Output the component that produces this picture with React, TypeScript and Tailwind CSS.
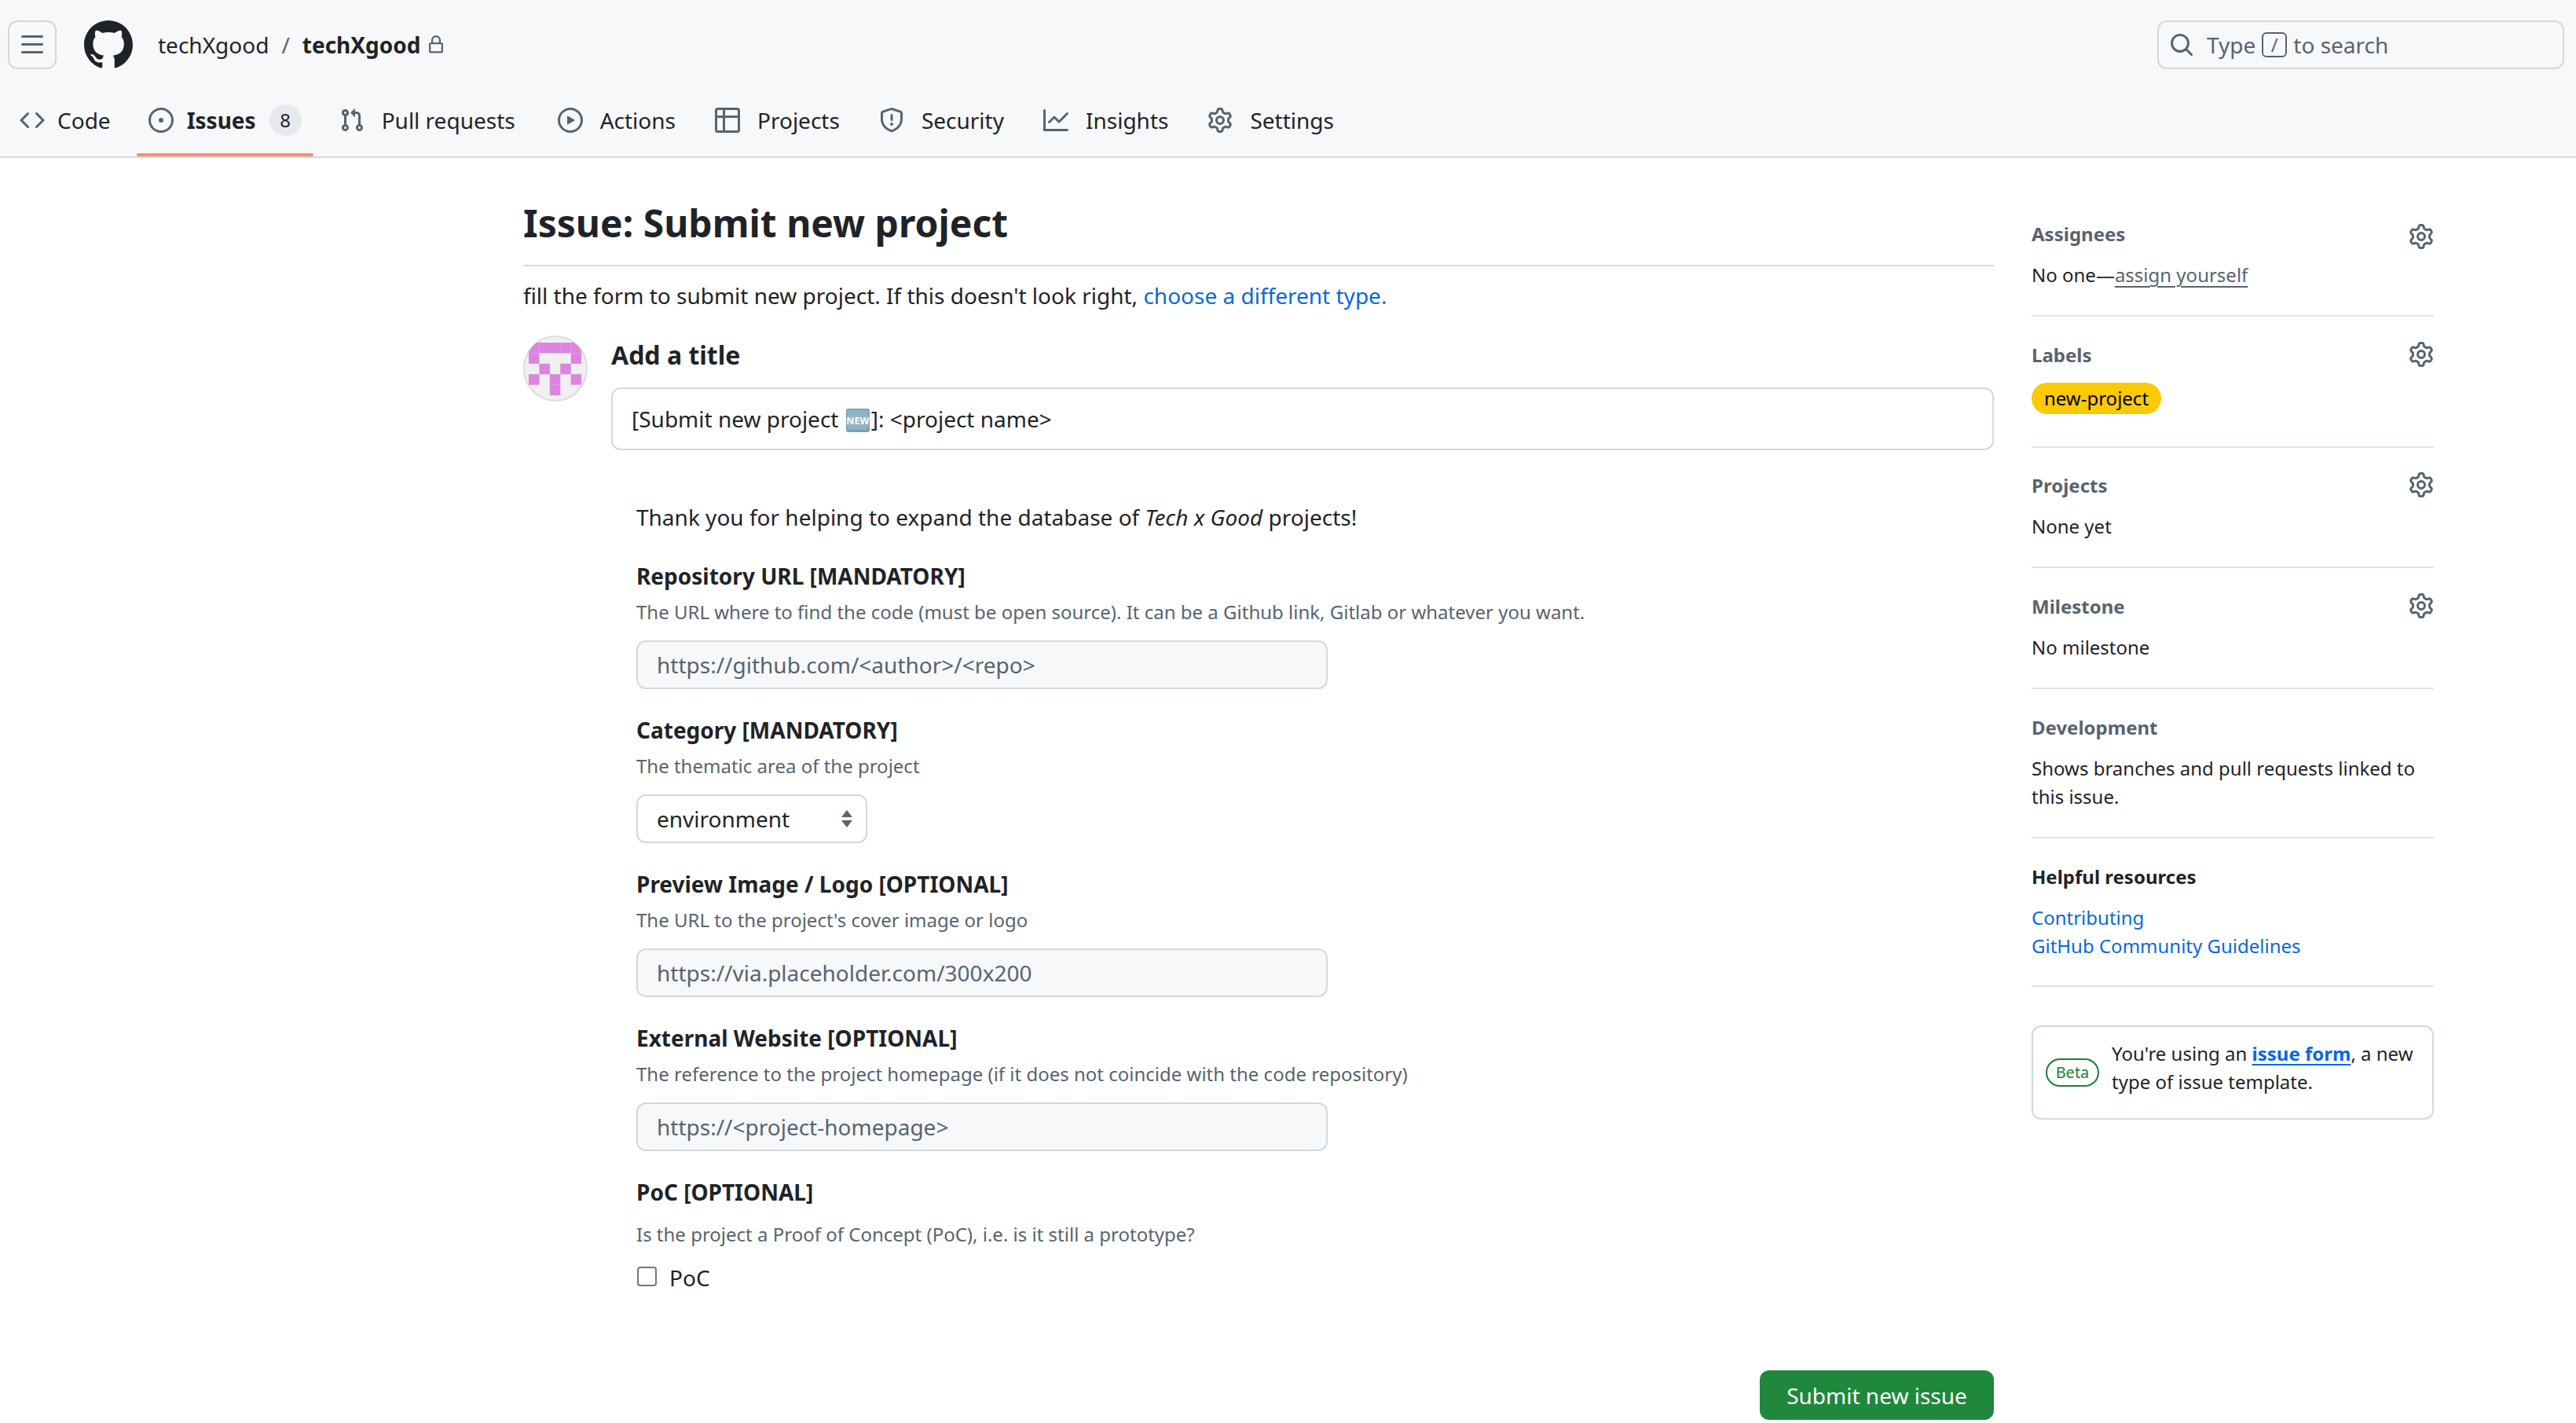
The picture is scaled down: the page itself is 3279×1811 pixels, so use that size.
import type { ReactNode } from "react";

// octicons, 16px grid
const ICONS = {
  bars: "M1 2.75A.75.75 0 0 1 1.75 2h12.5a.75.75 0 0 1 0 1.5H1.75A.75.75 0 0 1 1 2.75Zm0 5A.75.75 0 0 1 1.75 7h12.5a.75.75 0 0 1 0 1.5H1.75A.75.75 0 0 1 1 7.75ZM1.75 12h12.5a.75.75 0 0 1 0 1.5H1.75a.75.75 0 0 1 0-1.5Z",
  github: "M8 0c4.42 0 8 3.58 8 8a8.013 8.013 0 0 1-5.45 7.59c-.4.08-.55-.17-.55-.38 0-.27.01-1.13.01-2.2 0-.75-.25-1.23-.54-1.48 1.78-.2 3.65-.88 3.65-3.95 0-.88-.31-1.59-.82-2.15.08-.2.36-1.02-.08-2.12 0 0-.67-.22-2.2.82-.64-.18-1.32-.27-2-.27-.68 0-1.36.09-2 .27-1.53-1.03-2.2-.82-2.2-.82-.44 1.1-.16 1.92-.08 2.12-.51.56-.82 1.28-.82 2.15 0 3.06 1.86 3.75 3.64 3.95-.23.2-.44.55-.51 1.07-.46.21-1.61.55-2.33-.66-.15-.24-.6-.83-1.23-.82-.67.01-.27.38.01.53.34.19.73.9.82 1.13.16.45.68 1.31 2.69.94 0 .67.01 1.3.01 1.49 0 .21-.15.45-.55.38A7.995 7.995 0 0 1 0 8c0-4.42 3.58-8 8-8Z",
  lock: "M4 4a4 4 0 0 1 8 0v2h.25c.966 0 1.75.784 1.75 1.75v5.5A1.75 1.75 0 0 1 12.25 15h-8.5A1.75 1.75 0 0 1 2 13.25v-5.5C2 6.784 2.784 6 3.75 6H4Zm8.25 3.5h-8.5a.25.25 0 0 0-.25.25v5.5c0 .138.112.25.25.25h8.5a.25.25 0 0 0 .25-.25v-5.5a.25.25 0 0 0-.25-.25ZM10.5 6V4a2.5 2.5 0 1 0-5 0v2Z",
  search: "M10.68 11.74a6 6 0 0 1-7.922-8.982 6 6 0 0 1 8.982 7.922l3.04 3.04a.749.749 0 0 1-.326 1.275.749.749 0 0 1-.734-.215ZM11.5 7a4.499 4.499 0 1 0-8.997 0A4.499 4.499 0 0 0 11.5 7Z",
  code: "m11.28 3.22 4.25 4.25a.75.75 0 0 1 0 1.06l-4.25 4.25a.749.749 0 0 1-1.275-.326.749.749 0 0 1 .215-.734L13.94 8l-3.72-3.72a.749.749 0 0 1 .326-1.275.749.749 0 0 1 .734.215Zm-6.56 0a.751.751 0 0 1 1.042.018.751.751 0 0 1 .018 1.042L2.06 8l3.72 3.72a.749.749 0 0 1-.326 1.275.749.749 0 0 1-.734-.215L.47 8.53a.75.75 0 0 1 0-1.06Z",
  issue: "M8 9.5a1.5 1.5 0 1 0 0-3 1.5 1.5 0 0 0 0 3ZM8 0a8 8 0 1 1 0 16A8 8 0 0 1 8 0ZM1.5 8a6.5 6.5 0 1 0 13 0 6.5 6.5 0 0 0-13 0Z",
  pull: "M1.5 3.25a2.25 2.25 0 1 1 3 2.122v5.256a2.251 2.251 0 1 1-1.5 0V5.372A2.25 2.25 0 0 1 1.5 3.25Zm5.677-.177L9.573.677A.25.25 0 0 1 10 .854V2.5h1A2.5 2.5 0 0 1 13.5 5v5.628a2.251 2.251 0 1 1-1.5 0V5a1 1 0 0 0-1-1h-1v1.646a.25.25 0 0 1-.427.177L7.177 3.427a.25.25 0 0 1 0-.354ZM3.75 2.5a.75.75 0 1 0 0 1.5.75.75 0 0 0 0-1.5Zm0 9.5a.75.75 0 1 0 0 1.5.75.75 0 0 0 0-1.5Zm8.25.75a.75.75 0 1 0 1.5 0 .75.75 0 0 0-1.5 0Z",
  play: "M8 0a8 8 0 1 1 0 16A8 8 0 0 1 8 0ZM1.5 8a6.5 6.5 0 1 0 13 0 6.5 6.5 0 0 0-13 0Zm4.879-2.773 4.264 2.559a.25.25 0 0 1 0 .428l-4.264 2.559A.25.25 0 0 1 6 10.559V5.442a.25.25 0 0 1 .379-.215Z",
  table: "M0 1.75C0 .784.784 0 1.75 0h12.5C15.216 0 16 .784 16 1.75v12.5A1.75 1.75 0 0 1 14.25 16H1.75A1.75 1.75 0 0 1 0 14.25ZM6.5 6.5v8h7.75a.25.25 0 0 0 .25-.25V6.5Zm8-1.5V1.75a.25.25 0 0 0-.25-.25H6.5V5Zm-13 1.5v7.75c0 .138.112.25.25.25H5v-8ZM5 5V1.5H1.75a.25.25 0 0 0-.25.25V5Z",
  shield: "M7.467.133a1.748 1.748 0 0 1 1.066 0l5.25 1.68A1.75 1.75 0 0 1 15 3.48V7c0 1.566-.32 3.182-1.303 4.682-.983 1.498-2.585 2.813-5.032 3.855a1.697 1.697 0 0 1-1.33 0c-2.447-1.042-4.049-2.357-5.032-3.855C1.32 10.182 1 8.566 1 7V3.48a1.75 1.75 0 0 1 1.217-1.667Zm.61 1.429a.25.25 0 0 0-.153 0l-5.25 1.68a.25.25 0 0 0-.174.238V7c0 1.358.275 2.666 1.057 3.86.784 1.194 2.121 2.34 4.366 3.297a.196.196 0 0 0 .154 0c2.245-.956 3.582-2.104 4.366-3.298C13.225 9.666 13.5 8.36 13.5 7V3.48a.251.251 0 0 0-.174-.237l-5.25-1.68ZM8.75 4.75v3a.75.75 0 0 1-1.5 0v-3a.75.75 0 0 1 1.5 0ZM9 10.5a1 1 0 1 1-2 0 1 1 0 0 1 2 0Z",
  graph: "M1.5 1.75V13.5h13.75a.75.75 0 0 1 0 1.5H.75a.75.75 0 0 1-.75-.75V1.75a.75.75 0 0 1 1.5 0Zm14.28 2.53-5.25 5.25a.75.75 0 0 1-1.06 0L7 7.06 4.28 9.78a.751.751 0 0 1-1.042-.018.751.751 0 0 1-.018-1.042l3.25-3.25a.75.75 0 0 1 1.06 0L10 7.94l4.72-4.72a.751.751 0 0 1 1.042.018.751.751 0 0 1 .018 1.042Z",
  gear: "M8 0a8.2 8.2 0 0 1 .701.031C9.444.095 9.99.645 10.16 1.29l.288 1.107c.018.066.079.158.212.224.231.114.454.243.668.386.123.082.233.09.299.071l1.103-.303c.644-.176 1.392.021 1.82.63.27.385.506.792.704 1.218.315.675.111 1.422-.364 1.891l-.814.806c-.049.048-.098.147-.088.294.016.257.016.515 0 .772-.01.147.038.246.088.294l.814.806c.475.469.679 1.216.364 1.891a7.977 7.977 0 0 1-.704 1.217c-.428.61-1.176.807-1.82.63l-1.102-.302c-.067-.019-.177-.011-.3.071a5.909 5.909 0 0 1-.668.386c-.133.066-.194.158-.211.224l-.29 1.106c-.168.646-.715 1.196-1.458 1.26a8.006 8.006 0 0 1-1.402 0c-.743-.064-1.289-.614-1.458-1.26l-.289-1.106c-.018-.066-.079-.158-.212-.224a5.738 5.738 0 0 1-.668-.386c-.123-.082-.233-.09-.299-.071l-1.103.303c-.644.176-1.392-.021-1.82-.63a8.12 8.12 0 0 1-.704-1.218c-.315-.675-.111-1.422.363-1.891l.815-.806c.05-.048.098-.147.088-.294a6.214 6.214 0 0 1 0-.772c.01-.147-.038-.246-.088-.294l-.815-.806C.635 6.045.431 5.298.746 4.623a7.92 7.92 0 0 1 .704-1.217c.428-.61 1.176-.807 1.82-.63l1.102.302c.067.019.177.011.3-.071.214-.143.437-.272.668-.386.133-.066.194-.158.211-.224l.29-1.106C6.009.645 6.556.095 7.299.03 7.53.01 7.764 0 8 0Zm-.571 1.525c-.036.003-.108.036-.137.146l-.289 1.105c-.147.561-.549.967-.998 1.189-.173.086-.34.183-.5.29-.417.278-.97.423-1.529.27l-1.103-.303c-.109-.03-.175.016-.195.045-.22.312-.412.644-.573.99-.014.031-.021.11.059.19l.815.806c.411.406.562.957.53 1.456a4.709 4.709 0 0 0 0 .582c.032.499-.119 1.05-.53 1.456l-.815.806c-.081.08-.073.159-.059.19.162.346.353.677.573.989.02.03.085.076.195.046l1.102-.303c.56-.153 1.113-.008 1.53.27.161.107.328.204.501.29.447.222.85.629.997 1.189l.289 1.105c.029.109.101.143.137.146a6.6 6.6 0 0 0 1.142 0c.036-.003.108-.036.137-.146l.289-1.105c.147-.561.549-.967.998-1.189.173-.086.34-.183.5-.29.417-.278.97-.423 1.529-.27l1.103.303c.109.029.175-.016.195-.045.22-.313.411-.644.573-.99.014-.031.021-.11-.059-.19l-.815-.806c-.411-.406-.562-.957-.53-1.456a4.709 4.709 0 0 0 0-.582c-.032-.499.119-1.05.53-1.456l.815-.806c.081-.08.073-.159.059-.19a6.464 6.464 0 0 0-.573-.989c-.02-.03-.085-.076-.195-.046l-1.102.303c-.56.153-1.113.008-1.53-.27a4.44 4.44 0 0 0-.501-.29c-.447-.222-.85-.629-.997-1.189l-.289-1.105c-.029-.11-.101-.143-.137-.146a6.6 6.6 0 0 0-1.142 0ZM11 8a3 3 0 1 1-6 0 3 3 0 0 1 6 0ZM9.5 8a1.5 1.5 0 1 0-3.001.001A1.5 1.5 0 0 0 9.5 8Z",
};

const Icon = ({ name, size = 32, className = "" }: { name: keyof typeof ICONS; size?: number; className?: string }) => (
  <svg width={size} height={size} viewBox="0 0 16 16" fill="currentColor" className={`shrink-0 ${className}`}>
    <path d={ICONS[name]} />
  </svg>
);

const TABS: { label: string; icon: keyof typeof ICONS; cls: string; count?: string; active?: boolean }[] = [
  { label: "Code", icon: "code", cls: "gap-[16px]" },
  { label: "Issues", icon: "issue", cls: "gap-[17px]", count: "8", active: true },
  { label: "Pull requests", icon: "pull", cls: "gap-[22px]" },
  { label: "Actions", icon: "play", cls: "gap-[22px] ml-[6px]" },
  { label: "Projects", icon: "table", cls: "gap-[22px] ml-[2px]" },
  { label: "Security", icon: "shield", cls: "gap-[22px] ml-[2px]" },
  { label: "Insights", icon: "graph", cls: "gap-[22px] ml-[2px]" },
  { label: "Settings", icon: "gear", cls: "gap-[22px] ml-[2px]" },
];

const Header = () => (
  <header className="h-[201px] bg-[#f6f8fa] border-b-2 border-[#d1d9e0] box-border">
    <div className="flex items-center pt-[26px] pl-[10px] pr-[15px]">
      <button className="w-[62px] h-[62px] rounded-[12px] border-2 border-[#d1d9e0] flex items-center justify-center text-[#59636e]">
        <Icon name="bars" />
      </button>
      <Icon name="github" size={62} className="ml-[35px] text-[#1f2328]" />
      <span className="ml-[32px] text-[28px] text-[#1f2328]">techXgood</span>
      <span className="ml-[16px] text-[28px] text-[#59636e]">/</span>
      <span className="ml-[16px] text-[28px] font-bold text-[#1f2328]">techXgood</span>
      <Icon name="lock" size={24} className="ml-[8px] text-[#59636e]" />
      <div className="ml-auto w-[518px] h-[62px] rounded-[12px] border-2 border-[#d1d9e0] flex items-center pl-[13px] text-[28px] text-[#59636e]">
        <Icon name="search" size={32} />
        <span className="ml-[16px]">Type</span>
        <kbd className="mx-[8px] w-[32px] h-[32px] rounded-[6px] border-2 border-[#59636e] flex items-center justify-center text-[24px] font-['Noto_Sans']">/</kbd>
        <span>to search</span>
      </div>
    </div>
    <nav className="flex gap-[18px] pl-[10px] mt-[22px] h-[89px]">
      {TABS.map((t) => (
        <div key={t.label} className={`relative flex items-center px-[15px] pb-[3px] text-[28px] text-[#1f2328] ${t.cls}`}>
          <Icon name={t.icon} className="text-[#59636e]" />
          <span className={t.active ? "font-bold" : ""}>{t.label}</span>
          {t.count && (
            <span className="w-[41px] h-[40px] rounded-full bg-[#e6eaef] flex items-center justify-center text-[24px]">{t.count}</span>
          )}
          {t.active && <span className="absolute left-0 right-0 bottom-0 h-[4px] rounded-[4px] bg-[#fd8c73]" />}
        </div>
      ))}
    </nav>
  </header>
);

// identicon cells, 5x5
const CELLS = [
  [0, 0], [1, 0], [2, 0], [3, 0], [4, 0],
  [0, 1], [4, 1],
  [1, 2], [3, 2],
  [0, 3], [2, 3], [4, 3],
  [2, 4],
];

const Avatar = () => (
  <svg width="82" height="84" viewBox="0 0 82 84" className="shrink-0">
    <defs>
      <clipPath id="avatar-clip">
        <ellipse cx="41" cy="42" rx="40" ry="41" />
      </clipPath>
    </defs>
    <ellipse cx="41" cy="42" rx="40" ry="41" fill="#f0f0f0" stroke="#dcdcdc" strokeWidth="2" />
    <g clipPath="url(#avatar-clip)" fill="#dd84de">
      {CELLS.map(([x, y]) => (
        <rect key={`${x}-${y}`} x={7 + x * 13.4} y={9 + y * 13.4} width="13.5" height="13.5" />
      ))}
    </g>
  </svg>
);

const NewEmoji = () => (
  <svg width="30" height="30" viewBox="0 0 30 30" className="inline-block align-[-6px] mx-[2px]">
    <rect width="30" height="30" rx="3" fill="#7f9fb0" />
    <rect x="1.5" y="1.5" width="27" height="25" rx="2" fill="#8fb3c6" />
    <text x="15" y="20" textAnchor="middle" fontSize="12.5" fontWeight="700" fill="#fff" fontFamily="Noto Sans, sans-serif">NEW</text>
  </svg>
);

const FieldLabel = ({ title, desc }: { title: string; desc: string }) => (
  <>
    <div className="h-[36px] leading-[36px] text-[28px] font-bold text-[#1f2328]">{title}</div>
    <div className="mt-[12px] h-[32px] leading-[32px] text-[24px] text-[#59636e]">{desc}</div>
  </>
);

const TextField = ({ title, desc, placeholder }: { title: string; desc: string; placeholder: string }) => (
  <div className="mb-[34px]">
    <FieldLabel title={title} desc={desc} />
    <input
      placeholder={placeholder}
      className="mt-[20px] block w-[880px] h-[62px] px-[24px] rounded-[12px] border-2 border-[#d1d9e0] bg-[#f6f8fa] text-[28px] outline-none placeholder:text-[#59636e] placeholder:opacity-100"
    />
  </div>
);

const Form = () => (
  <div className="flex flex-col pl-[32px] pt-[65px]">
    <p className="h-[40px] leading-[40px] text-[28px] text-[#1f2328] mb-[37px]">
      Thank you for helping to expand the database of <em>Tech x Good</em> projects!
    </p>
    <TextField
      title="Repository URL [MANDATORY]"
      desc="The URL where to find the code (must be open source). It can be a Github link, Gitlab or whatever you want."
      placeholder="https://github.com/<author>/<repo>"
    />
    <div className="mb-[34px]">
      <FieldLabel title="Category [MANDATORY]" desc="The thematic area of the project" />
      <div className="relative mt-[20px] w-[294px] h-[62px]">
        <select className="appearance-none w-full h-full pl-[24px] rounded-[12px] border-2 border-[#d1d9e0] bg-white text-[28px] text-[#1f2328] outline-none">
          <option>environment</option>
        </select>
        <svg width="16" height="24" viewBox="0 0 16 24" className="absolute right-[18px] top-[19px]" fill="#59636e">
          <path d="M8 1 L15 10 H1 Z" />
          <path d="M8 23 L15 14 H1 Z" />
        </svg>
      </div>
    </div>
    <TextField
      title="Preview Image / Logo [OPTIONAL]"
      desc="The URL to the project's cover image or logo"
      placeholder="https://via.placeholder.com/300x200"
    />
    <TextField
      title="External Website [OPTIONAL]"
      desc="The reference to the project homepage (if it does not coincide with the code repository)"
      placeholder="https://<project-homepage>"
    />
    <div className="h-[36px] leading-[36px] text-[28px] font-bold text-[#1f2328]">PoC [OPTIONAL]</div>
    <div className="mt-[20px] h-[32px] leading-[32px] text-[24px] text-[#59636e]">
      Is the project a Proof of Concept (PoC), i.e. is it still a prototype?
    </div>
    <label className="mt-[19px] h-[40px] flex items-center text-[28px] text-[#1f2328]">
      <input type="checkbox" className="appearance-none w-[25px] h-[25px] m-0 ml-[1px] -mt-[3px] rounded-[4px] border-2 border-[#767676] bg-white" />
      <span className="ml-[16px]">PoC</span>
    </label>
    <button className="self-end mt-[98px] w-[298px] h-[63px] rounded-[12px] bg-[#1f883d] text-white text-[28px]">
      Submit new issue
    </button>
  </div>
);

const Section = ({ title, gear, gearClass = "", dark, children, className = "" }: { title: string; gear?: boolean; gearClass?: string; dark?: boolean; children: ReactNode; className?: string }) => (
  <section className={`border-b-2 border-[#dfe4e9] ${className}`}>
    <div className="flex items-center justify-between h-[34px]">
      <h3 className={`pt-[2px] text-[24px] font-bold ${dark ? "text-[#1f2328]" : "text-[#59636e]"}`}>{title}</h3>
      {gear && <Icon name="gear" className={`text-[#59636e] ${gearClass}`} />}
    </div>
    {children}
  </section>
);

const Body = ({ children }: { children: ReactNode }) => (
  <div className="mt-[18px] text-[24px] leading-[36px] text-[#1f2328]">{children}</div>
);

const Sidebar = () => (
  <aside className="w-[512px] shrink-0 pt-[79px]">
    <Section title="Assignees" gear gearClass="mt-[8px]" className="pb-[33px] mb-[31px]">
      <Body>
        No one—<span className="text-[#59636e] underline underline-offset-[5px] decoration-2">assign yourself</span>
      </Body>
    </Section>
    <Section title="Labels" gear className="pb-[41px] mb-[30px]">
      <div className="mt-[19px] w-[165px] h-[40px] rounded-full bg-[#fbca04] flex items-center justify-center text-[24px] text-black">new-project</div>
    </Section>
    <Section title="Projects" gear className="pb-[33px] mb-[31px]">
      <Body>None yet</Body>
    </Section>
    <Section title="Milestone" gear className="pb-[33px] mb-[31px]">
      <Body>No milestone</Body>
    </Section>
    <Section title="Development" className="pb-[33px] mb-[31px]">
      <Body>
        Shows branches and pull requests linked to
        <br />
        this issue.
      </Body>
    </Section>
    <Section title="Helpful resources" dark className="pb-[32px] mb-[49px]">
      <Body>
        <div className="text-[#0969da]">Contributing</div>
        <div className="text-[#0969da]">GitHub Community Guidelines</div>
      </Body>
    </Section>
    <div className="h-[120px] rounded-[12px] border-2 border-[#d1d9e0] flex items-center pl-[16px]">
      <span className="w-[68px] h-[36px] rounded-full border-2 border-[#1a7f37] flex items-center justify-center text-[20px] text-[#1a7f37] shrink-0">Beta</span>
      <p className="ml-[16px] mb-[13px] text-[24px] leading-[36px] text-[#1f2328]">
        You're using an <span className="font-bold text-[#0969da] underline underline-offset-[4px] decoration-2">issue form</span>, a new
        <br />
        type of issue template.
      </p>
    </div>
  </aside>
);

export default function App() {
  return (
    <div className="h-[1811px] overflow-hidden bg-white font-['Noto_Sans',sans-serif]">
      <Header />
      <main className="flex gap-[48px] pl-[666px]">
        <div className="w-[1872px] shrink-0">
          <h1 className="mt-[53px] h-[60px] leading-[60px] text-[48px] font-bold text-[#1f2328]">Issue: Submit new project</h1>
          <div className="mt-[23px] border-b-2 border-[#d1d9e0]" />
          <p className="mt-[17px] h-[40px] leading-[40px] text-[28px] text-[#1f2328]">
            fill the form to submit new project. If this doesn't look right, <span className="text-[#0969da]">choose a different type.</span>
          </p>
          <div className="flex mt-[31px] gap-[30px]">
            <Avatar />
            <div className="flex-1 min-w-0">
              <div className="pt-[5px] h-[45px] leading-[40px] text-[32px] font-bold text-[#1f2328]">Add a title</div>
              <div className="mt-[21px] h-[80px] rounded-[12px] border-2 border-[#d1d9e0] flex items-center pl-[24px] text-[28px] text-[#1f2328] whitespace-pre">
                <span>[Submit new project <NewEmoji />]: &lt;project name&gt;</span>
              </div>
              <Form />
            </div>
          </div>
        </div>
        <Sidebar />
      </main>
    </div>
  );
}
